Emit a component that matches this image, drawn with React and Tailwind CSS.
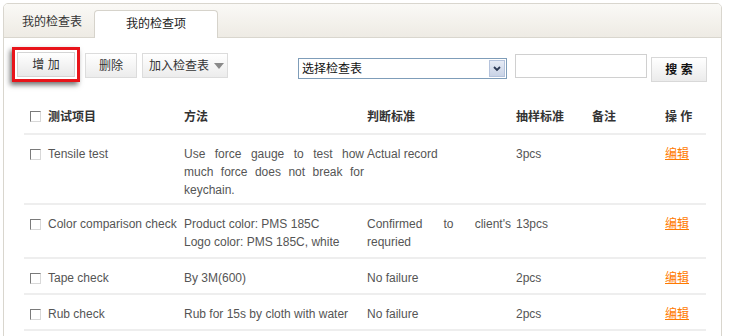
import React from "react";

const font = { fontFamily: '"Liberation Sans", Arial, "Noto Sans CJK SC", sans-serif' };

function Check() {
  return (
    <span className="inline-block w-[11px] h-[11px] border border-t-[#7a7a7a] border-l-[#7a7a7a] border-b-[#d8d8d8] border-r-[#d8d8d8] bg-white align-middle" />
  );
}

const rows = [
  {
    name: "Tensile test",
    method: "Use force gauge to test how much force does not break for keychain.",
    judge: "Actual record",
    sample: "3pcs",
    pb: "pb-[4px]",
  },
  {
    name: "Color comparison check",
    method: ["Product color: PMS 185C", "Logo color: PMS 185C, white"],
    judge: "Confirmed to client's requried",
    sample: "13pcs",
    pb: "pb-[6px]",
  },
  { name: "Tape check", method: "By 3M(600)", judge: "No failure", sample: "2pcs", pb: "pb-[6px]" },
  { name: "Rub check", method: "Rub for 15s by cloth with water", judge: "No failure", sample: "2pcs", pb: "pb-[6px]" },
];

export default function App() {
  return (
    <div className="w-[730px] h-[336px] overflow-hidden bg-white text-[12px]" style={font}>
      <div className="ml-[3px] mt-[3px] w-[719px] h-[400px] border border-[#d9d6ce] rounded-t-[5px] overflow-hidden">
        {/* tab bar */}
        <div className="h-[34px] bg-gradient-to-b from-[#faf9f6] to-[#eeebe4] border-b border-[#d9d6ce] flex items-end pl-[8px]">
          <div className="w-[80px] h-[27px] flex items-center justify-center text-[#333] text-[12px] pb-[4px] mr-[2px]">
            我的检查表
          </div>
          <div className="w-[124px] h-[28px] -mb-px bg-white border border-b-0 border-[#d6d3cb] rounded-t-[4px] flex items-center justify-center text-[#222] text-[12px] pb-[2px]">
            我的检查项
          </div>
        </div>

        {/* toolbar */}
        <div className="flex items-start mt-[9px] pl-[8px] pr-[14px] h-[35px]">
          <div className="border-[3px] border-[#e8141a] p-[2px] shadow-[-2px_3px_5px_rgba(0,0,0,0.55)]">
            <div className="w-[58px] h-[25px] border border-[#d4d4d4] bg-gradient-to-b from-[#ffffff] to-[#e9e9e9] flex items-center justify-center text-[#333]">
              增&nbsp;加
            </div>
          </div>
          <div className="ml-[5px] mt-[6px] w-[52px] h-[25px] border border-[#dcdcdc] bg-gradient-to-b from-[#ffffff] to-[#ececec] flex items-center justify-center text-[#333]">
            删除
          </div>
          <div className="ml-[5px] mt-[6px] w-[86px] h-[25px] border border-[#dcdcdc] bg-gradient-to-b from-[#ffffff] to-[#ececec] flex items-center pl-[6px] text-[#333]">
            <span>加入检查表</span>
            <svg width="10" height="6" viewBox="0 0 10 6" className="ml-[5px] mt-[1px]">
              <polygon points="0,0 10,0 5,6" fill="#8a8a8a" />
            </svg>
          </div>
          <div className="flex-1" />
          <div className="mt-[11px] w-[209px] h-[21px] border border-[#7f9db9] bg-white flex items-center">
            <span className="flex-1 pl-[3px] text-[#111]">选择检查表</span>
            <div className="w-[16px] h-[17px] mr-px border border-[#b5c3dc] bg-gradient-to-b from-[#e6ebf5] to-[#c9d3e6] flex items-center justify-center">
              <svg width="8" height="6" viewBox="0 0 8 6">
                <polyline points="1,1 4,4 7,1" fill="none" stroke="#2d3a55" strokeWidth="1.8" />
              </svg>
            </div>
          </div>
          <div className="ml-[8px] mt-[7px] w-[132px] h-[24px] border border-[#d0d0d0] bg-white" />
          <div className="ml-[4px] mt-[10px] w-[56px] h-[25px] border border-[#d8d8d8] bg-gradient-to-b from-[#ffffff] to-[#ebebeb] flex items-center justify-center text-[#111] font-bold">
            搜&nbsp;索
          </div>
        </div>

        {/* table */}
        <table className="ml-[20px] mt-[18px] w-[682px] table-fixed border-collapse">
          <colgroup>
            <col className="w-[160px]" />
            <col className="w-[183px]" />
            <col className="w-[149px]" />
            <col className="w-[76px]" />
            <col className="w-[73px]" />
            <col className="w-[41px]" />
          </colgroup>
          <thead>
            <tr className="border-b-2 border-[#eeeeee]">
              <th className="h-[34px] text-left font-bold text-[#333] pl-[6px]">
                <span className="flex items-center gap-[7px]">
                  <Check />
                  测试项目
                </span>
              </th>
              <th className="text-left font-bold text-[#333]">方法</th>
              <th className="text-left font-bold text-[#333]">判断标准</th>
              <th className="text-left font-bold text-[#333]">抽样标准</th>
              <th className="text-left font-bold text-[#333]">备注</th>
              <th className="text-left font-bold text-[#333]">操&nbsp;作</th>
            </tr>
          </thead>
          <tbody className="text-[#555] leading-[18px]">
            {rows.map((r, i) => (
              <tr key={i} className="border-b-2 border-[#eeeeee] align-top">
                <td className={`pl-[6px] pt-[10px] ${r.pb}`}>
                  <span className="flex items-center gap-[7px] whitespace-nowrap">
                    <Check />
                    {r.name}
                  </span>
                </td>
                <td className={`pt-[10px] ${r.pb} pr-[3px] text-justify`}>
                  {Array.isArray(r.method)
                    ? r.method.map((m, k) => <div key={k}>{m}</div>)
                    : r.method}
                </td>
                <td className={`pt-[10px] ${r.pb} pr-[5px] text-justify`}>{r.judge}</td>
                <td className={`pt-[10px] ${r.pb}`}>{r.sample}</td>
                <td className={`pt-[10px] ${r.pb}`}></td>
                <td className={`pt-[10px] ${r.pb}`}>
                  <a className="text-[#ff7a00] underline leading-[18px]" href="#">编辑</a>
                </td>
              </tr>
            ))}
          </tbody>
        </table>
      </div>
    </div>
  );
}
